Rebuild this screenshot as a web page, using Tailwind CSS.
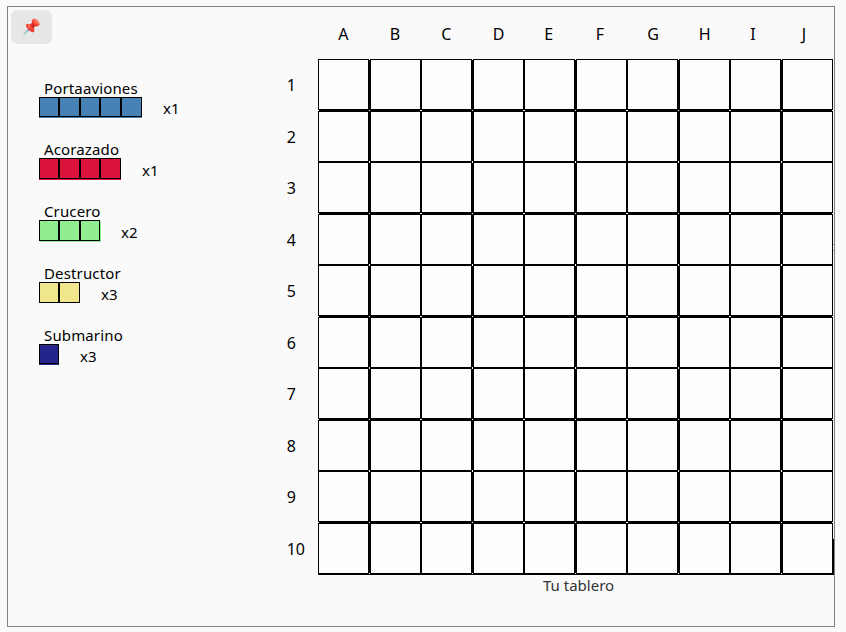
<!DOCTYPE html>
<html lang="es">
<head>
<meta charset="utf-8">
<title>Hundir la flota</title>
<script src="https://cdn.jsdelivr.net/npm/@tailwindcss/browser@4"></script>
</head>
<body class="h-[632px] w-[846px] overflow-hidden bg-[#fafafa] pt-[6px] pl-[7px] font-['Noto_Sans',sans-serif] text-black">
<main class="relative flex h-[621px] w-[828px] border border-[#808080]">
  <aside class="w-[272px] shrink-0 pt-[3px] pl-[3px]">
    <button class="flex h-[34px] w-[41px] items-center justify-center rounded-[6px] bg-[#e7e7e7] pb-[2px] text-[15px] leading-none" aria-label="Fijar">📌</button>
    <section id="fleet" class="mt-[34px] ml-[28px] grid grid-rows-[61px_62px_62px_62px_62px] text-[15px] leading-[20px]"></section>
  </aside>
  <section class="w-[554px] shrink-0 pt-[15px] pl-[6px]">
    <div id="letters" class="ml-[32px] grid h-[24px] w-[515px] grid-cols-10 pl-[20.3px] text-left text-[16px] leading-[24px]"></div>
    <div class="mt-[13px] flex">
      <div id="numbers" class="grid h-[516px] w-[32px] shrink-0 grid-rows-[repeat(10,51.5px)] items-center pt-[0.5px] pl-[0.7px] text-[16px]"></div>
      <div class="relative">
        <div id="board" class="grid w-[515px] grid-cols-[52px_51px_52px_51px_52px_51px_52px_51px_52px_51px] grid-rows-[52px_51px_52px_51px_52px_51px_52px_51px_52px_52px]"></div>
        <svg id="joints" class="absolute top-0 left-0" width="516" height="516" shape-rendering="crispEdges" fill="#fff"><rect x="515" y="480" width="1" height="36" fill="#000"/></svg>
      </div>
    </div>
    <p class="-mt-px pl-[257px] text-[15px] leading-[22px] text-[#333]">Tu tablero</p>
  </section>
  <div class="absolute top-[237px] right-0 h-[7px] w-px border-y border-[#808080]"></div>
</main>
<script>
const ships = [
  ['Portaaviones', 'bg-[#4682b4] shadow-[0_1px_0_#4682b4]', 5, 'x1', 20, 0],
  ['Acorazado', 'bg-[#dc143c] shadow-[0_1px_0_#dc143c]', 4, 'x1', 21, 1],
  ['Crucero', 'bg-[#90ee90] shadow-[1px_1px_0_#90ee90]', 3, 'x2', 21, 1],
  ['Destructor', 'bg-[#f0e68c]', 2, 'x3', 21, 1],
  ['Submarino', 'bg-[#24248c] shadow-[0_1px_0_#24248c]', 1, 'x3', 20, 1],
];
const widths = [20, 21, 20, 21, 21];
document.getElementById('fleet').innerHTML = ships.map(([name, color, n, count, h, dy]) =>
  `<div><p class="h-[19px] pl-[5px] tracking-[0.14px]">${name}</p><div class="flex">` +
  widths.slice(0, n).map(w => `<i class="relative block border border-black ${color}" style="width:${w}px;height:${h}px"></i>`).join('') +
  `<span class="ml-[21px]" style="margin-top:${1 + dy}px">${count}</span></div></div>`).join('');
document.getElementById('letters').innerHTML = [...'ABCDEFGHIJ'].map(c => `<span class="w-[51.5px]">${c}</span>`).join('');
document.getElementById('letters').style.gridTemplateColumns = 'repeat(10,51.5px)';
let nums = '', cells = '', dots = '';
for (let r = 0; r < 10; r++) {
  nums += `<span>${r + 1}</span>`;
  for (let c = 0; c < 10; c++) {
    cells += `<i class="border border-black bg-[#fdfdfd] ${c % 2 ? '' : 'border-r-2'} ${r % 2 && r < 9 ? '' : 'border-b-2'}"></i>`;
  }
}
/* light pixels where cell corners meet */
for (let r = 0; r <= 10; r++) for (let c = 0; c <= 10; c++) {
  if (r % 2 || c % 2) {
    const x = c % 2 ? 51 + 103 * (c - 1) / 2 : c ? 103 * c / 2 - 1 : 0;
    const y = r % 2 ? 51 + 103 * (r - 1) / 2 : r ? 103 * r / 2 - 1 : 0;
    dots += `<rect x="${x}" y="${y}" width="${c % 2 || !c || c === 10 ? 1 : 2}" height="${r % 2 || !r || r === 10 ? 1 : 2}"/>`;
  }
}
document.getElementById('numbers').innerHTML = nums;
document.getElementById('board').innerHTML = cells;
document.getElementById('joints').innerHTML += dots;
</script>
</body>
</html>
